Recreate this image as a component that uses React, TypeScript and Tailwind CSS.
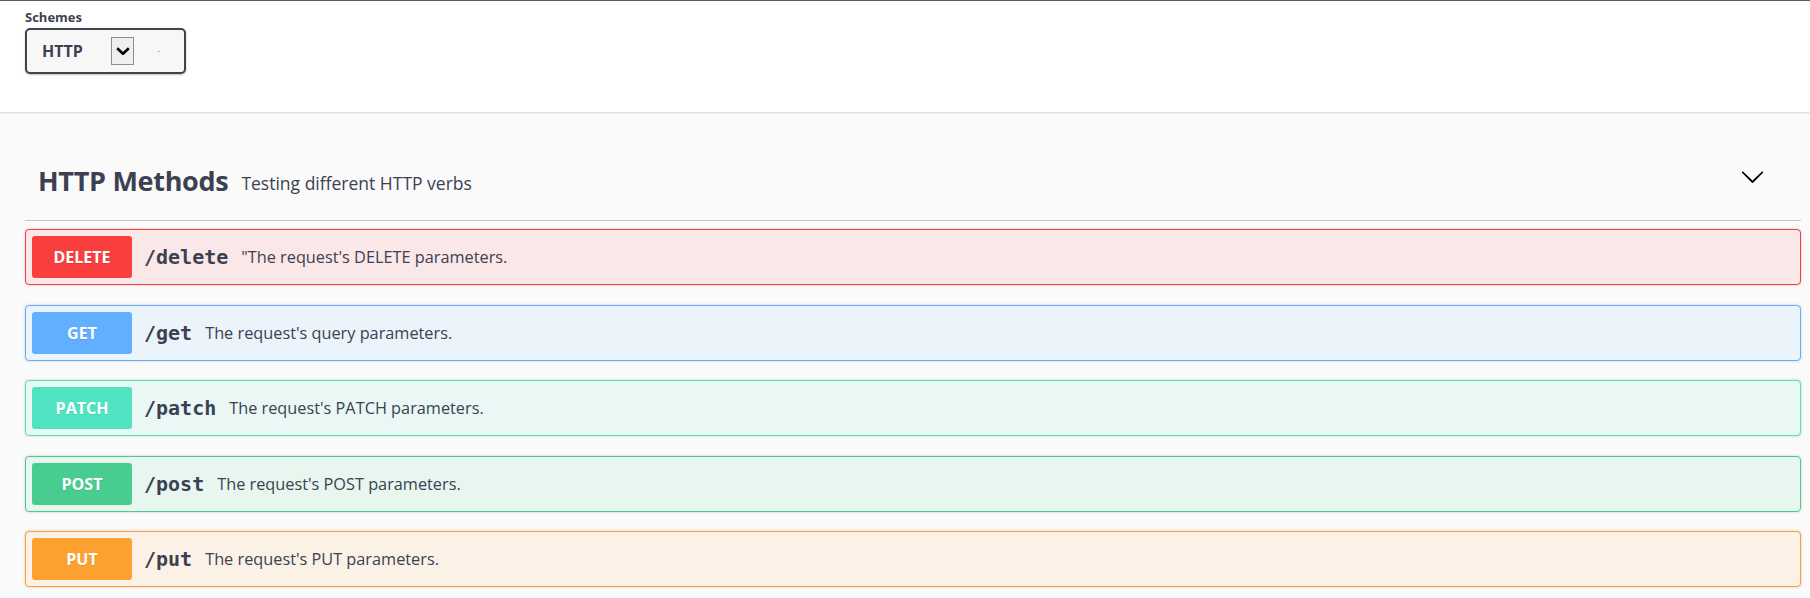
import type { ReactNode } from 'react';

interface Operation {
  method: string;
  path: string;
  summary: string;
  color: string;
  border: string;
  bg: string;
}

const operations: Operation[] = [
  { method: 'DELETE', path: '/delete', summary: '"The request\'s DELETE parameters.', color: 'bg-[#f93e3e]', border: 'border-[#f93e3e]', bg: 'bg-[#fae7e7]' },
  { method: 'GET', path: '/get', summary: "The request's query parameters.", color: 'bg-[#61affe]', border: 'border-[#61affe]', bg: 'bg-[#ebf3fb]' },
  { method: 'PATCH', path: '/patch', summary: "The request's PATCH parameters.", color: 'bg-[#50e3c2]', border: 'border-[#50e3c2]', bg: 'bg-[#e9f8f5]' },
  { method: 'POST', path: '/post', summary: "The request's POST parameters.", color: 'bg-[#49cc90]', border: 'border-[#49cc90]', bg: 'bg-[#e8f6f0]' },
  { method: 'PUT', path: '/put', summary: "The request's PUT parameters.", color: 'bg-[#fca130]', border: 'border-[#fca130]', bg: 'bg-[#fbf1e6]' },
];

export default function App() {
  return (
    <div className="w-[1810px] h-[598px] overflow-hidden bg-[#fafafa] text-[#3b4151] font-['Open_Sans',sans-serif]">
      {/* Schemes bar */}
      <SchemeContainer />

      {/* Tag section */}
      <div className="pl-[25px] pr-[9px]">
        <div className="flex items-center h-[109px] pt-[30px] border-b border-[#c4c5c9]">
          <h4 className="pl-[13px] text-[27px] font-bold tracking-[-0.3px] leading-[32px]">HTTP Methods</h4>
          <small className="pl-[13px] text-[17.5px] leading-[22px] mt-[3px]">Testing different HTTP verbs</small>
          <div className="flex-1" />
          <ChevronDown className="w-[25px] h-[25px] mb-[9px] mr-[36px]" />
        </div>

        <div className="flex flex-col gap-[19.5px] pt-[8px]">
          {operations.map((op) => (
            <OperationRow key={op.method} op={op} />
          ))}
        </div>
      </div>
    </div>
  );
}

// Top white bar with the scheme select
function SchemeContainer() {
  return (
    <div className="relative h-[112px] bg-white border-t border-[#5b5b5b] shadow-[0_1px_2px_0_rgba(0,0,0,0.15)] px-[25px] pt-[8px]">
      <label className="block text-[13px] font-bold leading-[16px]">Schemes</label>
      <div className="mt-[3px] flex items-center w-[161px] h-[46px] rounded-[5px] border-2 border-[#41444e] bg-[#f7f7f7] shadow-[0_1px_2px_0_rgba(0,0,0,0.25)] pl-[15px]">
        <span className="w-[69px] text-[16px] font-bold">HTTP</span>
        <span className="flex items-center justify-center w-[23px] h-[28px] border border-[#8f8f8f] bg-[#efefef]">
          <svg viewBox="0 0 14 8" className="w-[14px] h-[8px]" fill="none" stroke="#000" strokeWidth="2.6">
            <path d="M1.2 1.2l5.8 5.6 5.8-5.6" />
          </svg>
        </span>
        <span className="ml-[24px] mt-[1px] w-[2px] h-[1px] bg-[#b5b5b5]" />
      </div>
    </div>
  );
}

function OperationRow({ op }: { op: Operation }) {
  return (
    <div className={`flex items-center h-[56px] rounded-[4px] border ${op.border} ${op.bg} shadow-[0_0_3px_rgba(0,0,0,0.19)] px-[6px]`}>
      <MethodBadge color={op.color}>{op.method}</MethodBadge>
      <span className="pl-[12px] pr-[13px] font-['DejaVu_Sans_Mono',monospace] text-[20px] font-bold leading-[24px] text-[#3b4151]">
        {op.path}
      </span>
      <span className="text-[16.3px] leading-[20px] text-[#3b4151]">{op.summary}</span>
    </div>
  );
}

function MethodBadge({ color, children }: { color: string; children: ReactNode }) {
  return (
    <span className={`flex items-center justify-center w-[100px] h-[42px] rounded-[3px] ${color} text-white text-[16px] font-bold [text-shadow:0_1px_0_rgba(0,0,0,0.1)]`}>
      {children}
    </span>
  );
}

function ChevronDown({ className }: { className?: string }) {
  return (
    <svg viewBox="0 0 20 20" className={className} fill="#000">
      <path d="M17.418 6.109c.272-.268.709-.268.979 0s.271.701 0 .969l-7.908 7.83c-.27.268-.707.268-.979 0l-7.908-7.83c-.27-.268-.27-.701 0-.969.271-.268.709-.268.979 0L10 13.25l7.418-7.141z" />
    </svg>
  );
}
